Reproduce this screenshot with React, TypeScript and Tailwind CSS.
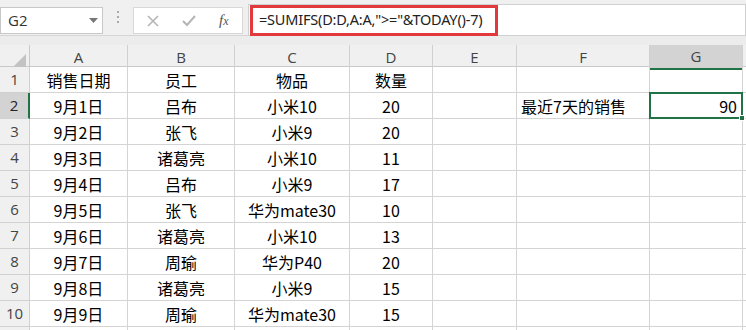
import React from 'react';

const cols = ['A', 'B', 'C', 'D', 'E', 'F', 'G'];

const rows: string[][] = [
  ['销售日期', '员工', '物品', '数量'],
  ['9月1日', '吕布', '小米10', '20'],
  ['9月2日', '张飞', '小米9', '20'],
  ['9月3日', '诸葛亮', '小米10', '11'],
  ['9月4日', '吕布', '小米9', '17'],
  ['9月5日', '张飞', '华为mate30', '10'],
  ['9月6日', '诸葛亮', '小米10', '13'],
  ['9月7日', '周瑜', '华为P40', '20'],
  ['9月8日', '诸葛亮', '小米9', '15'],
  ['9月9日', '周瑜', '华为mate30', '15'],
  ['', '', '', ''],
];

const grid = 'grid grid-cols-[30px_98px_107px_115px_83px_84px_133px_93px_1fr]';
const cellFont = { fontFamily: '"Noto Sans CJK SC", "Noto Sans", sans-serif' };

export default function App() {
  return (
    <div className="w-[746px] h-[330px] overflow-hidden bg-white relative select-none" style={cellFont}>
      {/* Formula bar */}
      <div className="flex items-start h-[36px] bg-[#f0f0f0] border-b border-[#d6d6d6]">
        <div className="mt-[7px] w-[103px] h-[27px] bg-white border border-[#c8c8c8] flex items-center justify-between pl-[7px] pr-[4px]">
          <span className="text-[15px] text-[#333]" style={{ fontFamily: '"Open Sans", sans-serif' }}>G2</span>
          <svg width="9" height="6" viewBox="0 0 9 6"><path d="M0 0h9L4.5 5z" fill="#777" /></svg>
        </div>
        <div className="w-[30px] h-[34px] flex flex-col items-center justify-center gap-[3px]">
          <span className="w-[2px] h-[2px] bg-[#aaa]" />
          <span className="w-[2px] h-[2px] bg-[#aaa]" />
          <span className="w-[2px] h-[2px] bg-[#aaa]" />
        </div>
        <div className="mt-[7px] w-[110px] h-[27px] bg-white border border-[#d8d8d8] flex items-center pl-[13px]">
          <svg width="12" height="12" viewBox="0 0 12 12"><path d="M1 1l10 10M11 1L1 11" stroke="#b5b5b5" strokeWidth="1.6" /></svg>
          <svg className="ml-[23px]" width="14" height="12" viewBox="0 0 14 12"><path d="M1 6l4 4 8-9" stroke="#b5b5b5" strokeWidth="2" fill="none" /></svg>
          <span className="ml-[23px] text-[15px] italic text-[#555]" style={{ fontFamily: '"Liberation Serif", serif' }}>f<span className="text-[12px]">x</span></span>
        </div>
        <div className="ml-[5px] mt-[4px] flex-1 h-[32px] bg-white border border-[#d0d0d0] flex items-center pl-[10px]">
          <span className="text-[14.5px] text-[#222] tracking-[-0.2px]" style={{ fontFamily: '"Noto Sans", sans-serif' }}>
            =SUMIFS(D:D,A:A,"&gt;="&amp;TODAY()-7)
          </span>
        </div>
      </div>
      {/* Red annotation */}
      <div className="absolute left-[250px] top-[5px] w-[248px] h-[31px] border-[3px] border-[#e2393c]" />

      <div className="h-[9px] bg-[#ececec]" />

      {/* Column headers */}
      <div className={`${grid} h-[22px] bg-[#f0f0f0] border-b border-[#c9c9c9]`}>
        <div className="border-r border-[#c9c9c9] flex items-end justify-end pr-[3px] pb-[3px]">
          <svg width="13" height="13" viewBox="0 0 13 13"><path d="M13 0v13H0z" fill="#c3c3c3" /></svg>
        </div>
        {cols.map((c) => (
          <div
            key={c}
            className={`flex items-center justify-center text-[15px] text-[#444] border-r border-[#d0d0d0] ${
              c === 'G' ? 'bg-[#d3d3d3] border-b-2 border-b-[#217346] text-[#222]' : ''
            }`}
            style={{ fontFamily: '"Open Sans", sans-serif' }}
          >
            {c}
          </div>
        ))}
        <div />
      </div>

      {/* Rows */}
      {rows.map((r, i) => {
        const n = i + 1;
        return (
          <div key={n} className={`${grid} h-[26px]`}>
            <div
              className={`flex items-center justify-center text-[15px] border-b border-r border-[#d0d0d0] ${
                n === 2 ? 'bg-[#d3d3d3] border-r-2 border-r-[#217346] text-[#222]' : 'bg-[#f0f0f0] text-[#444]'
              }`}
              style={{ fontFamily: '"Open Sans", sans-serif' }}
            >
              {n <= 10 ? n : ''}
            </div>
            {r.map((v, j) => (
              <div key={j} className="flex items-center justify-center text-[16px] text-black border-b border-r border-[#d4d4d4] whitespace-nowrap">
                {v}
              </div>
            ))}
            <div className="border-b border-r border-[#d4d4d4]" />
            <div className="flex items-center pl-[4px] text-[16px] text-black border-b border-r border-[#d4d4d4] whitespace-nowrap">
              {n === 2 ? '最近7天的销售' : ''}
            </div>
            {n === 2 ? (
              <div className="relative flex items-center justify-end pr-[5px] text-[16px] text-black border-b border-r border-[#d4d4d4]">
                <div className="absolute -left-[1px] -top-[1px] -right-[1px] -bottom-[1px] border-2 border-[#217346]" />
                <div className="absolute -right-[3px] -bottom-[3px] w-[6px] h-[6px] bg-[#217346] border border-white" />
                90
              </div>
            ) : (
              <div className="border-b border-r border-[#d4d4d4]" />
            )}
            <div className="border-b border-[#d4d4d4]" />
          </div>
        );
      })}
    </div>
  );
}
